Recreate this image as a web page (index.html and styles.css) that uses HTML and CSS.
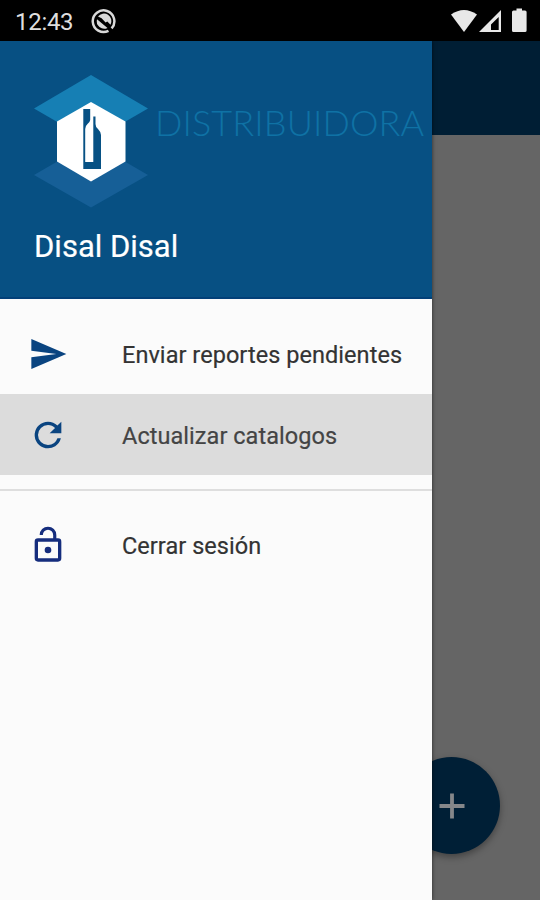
FILE: index.html
```
<!DOCTYPE html>
<html lang="es">
<head>
<meta charset="utf-8">
<title>Disal</title>
<link rel="stylesheet" href="styles.css">
</head>
<body>
<div class="screen">
  <header class="status">
    <span class="clock">12:43</span>
    <svg class="notice" viewBox="0 0 26 26"><path d="M20.600 20.400A10.800 10.800 0 1 0 17.500 22.800" fill="none" stroke="#d9d9d9" stroke-width="2.500"/><path d="M7 8.500A7.500 7.500 0 0 1 19.500 16.700L16.300 13.600L14.600 14.600L10.600 10.200Z" fill="#d9d9d9"/><path d="M6 11.300L16.500 20A7.500 7.500 0 0 1 6 11.300Z" fill="#d9d9d9"/></svg>
    <svg class="signals" viewBox="0 0 80 26"><g fill="#e8e8e8"><path d="M2 6.500Q15 -2.500 28 6.500L15 24Z"/><path fill-rule="evenodd" d="M30 24L52 2V24ZM42 22H49.700V9L42 16.500Z"/><path d="M67.500 .5H73V2.500H76Q77.600 2.500 77.600 4V22.500Q77.600 24 76 24H64.500Q63 24 63 22.500V4Q63 2.500 64.500 2.500H67.500Z"/></g></svg>
  </header>
  <div class="body">
    <aside class="drawer">
      <div class="brand">
        <div class="brand-row">
          <svg class="logo" viewBox="0 0 114 134"><path d="M57 0L114 33.500L57 66.500L0 33.500Z" fill="#167fb4"/><path d="M57 67L114 100L57 132.500L0 100Z" fill="#165f97"/><path d="M57 27L91.500 46.500V86.500L57 106.500L23 86.500V46.500Z" fill="#fff"/><path d="M49.300 34H56.200V45Q56 47 53.500 49Q51.200 51 51.200 54V87H59.300V41.500H61.500V49Q61.500 52 64 54Q67 57 67 60V94H49.300Z" fill="#075184"/></svg>
          <span class="wordmark">DISTRIBUIDORA</span>
        </div>
        <div class="user">Disal Disal</div>
      </div>
      <nav class="menu">
        <a class="item"><svg viewBox="0 0 24 24"><path d="M2.010 21L23 12 2.010 3 2 10l15 2-15 2z"/></svg><span>Enviar reportes pendientes</span></a>
        <a class="item active"><svg viewBox="0 0 24 24"><path d="M17.650 6.350A7.958 7.958 0 0 0 12 4a8 8 0 1 0 7.730 10h-2.080A5.990 5.990 0 0 1 12 18a6 6 0 1 1 0-12c1.660 0 3.140.69 4.220 1.780L13 11h7V4z"/></svg><span>Actualizar catalogos</span></a>
        <hr>
        <a class="item logout"><svg viewBox="0 0 24 24"><path d="M12 17a2 2 0 1 0 0-4 2 2 0 0 0 0 4zm6-9h-1V6a5 5 0 0 0-10 0h1.900a3.100 3.100 0 0 1 6.200 0v2H6a2 2 0 0 0-2 2v10a2 2 0 0 0 2 2h12a2 2 0 0 0 2-2V10a2 2 0 0 0-2-2zm0 12H6V10h12z"/></svg><span>Cerrar sesión</span></a>
      </nav>
    </aside>
    <main class="page">
      <div class="appbar"></div>
      <button class="fab" aria-label="Agregar"><svg viewBox="0 0 26 26"><path d="M13 .5V25.500M.5 13H25.500" stroke="#85878a" stroke-width="3.800"/></svg></button>
    </main>
  </div>
</div>
</body>
</html>
```
FILE: styles.css
```
* { box-sizing: border-box; }
body { margin: 0; font-family: Roboto, sans-serif; }
.screen { width: 540px; height: 900px; overflow: hidden; display: flex; flex-direction: column; background: #fafafa; }
.status { height: 41px; flex: none; background: #000; display: flex; align-items: center; padding: 0 11px 0 15px; }
.clock { width: 76px; font-size: 24px; line-height: 28px; color: #dedede; padding-top: 3px; letter-spacing: -.3px; }
.notice { width: 26px; height: 26px; margin-top: 1px; }
.signals { width: 80px; height: 26px; margin: 0 0 0 auto; }
.body { flex: 1; display: flex; }
.drawer { width: 432px; flex: none; background: #fbfbfb; position: relative; z-index: 1; box-shadow: 0 0 4px rgba(0,0,0,.6); }
.brand { height: 258px; background: #075083; border-bottom: 2px solid #034078; padding: 34px 0 0 34px; }
.brand-row { display: flex; height: 134px; }
.logo { width: 114px; height: 134px; flex: none; }
.wordmark { margin: 25px 0 0 7px; font-family: Lato, sans-serif; font-weight: 300; font-size: 36px; line-height: 44px; letter-spacing: .12px; color: #0f72a5; white-space: nowrap; }
.user { margin-top: 20px; font-size: 31px; line-height: 36px; color: #fff; white-space: nowrap; -webkit-text-stroke: .2px currentColor; }
.menu { padding-top: 14px; }
.item { height: 81px; display: flex; align-items: center; padding-left: 27.500px; font-size: 23.500px; letter-spacing: .05px; color: #333; white-space: nowrap; -webkit-text-stroke: .2px currentColor; }
.item svg { width: 40px; height: 40px; flex: none; margin-right: 54.500px; fill: #0a4480; }
.item span { padding-top: 3px; }
.active { background: #dcdcdc; color: #444; }
.logout { height: 79px; }
.logout svg { fill: #152d7d; }
hr { height: 2px; border: 0; background: #dedede; margin: 14px 0; }
.page { flex: 1; background: #656565; display: flex; flex-direction: column; justify-content: space-between; }
.appbar { height: 94px; background: #001e34; }
.fab { width: 97px; height: 97px; margin: 0 0 46px -29px; border: 0; border-radius: 50%; background: #001f36; box-shadow: 0 3px 7px rgba(0,0,0,.35); display: flex; align-items: center; justify-content: center; padding: 0; }
.fab svg { width: 26px; height: 26px; }
```
